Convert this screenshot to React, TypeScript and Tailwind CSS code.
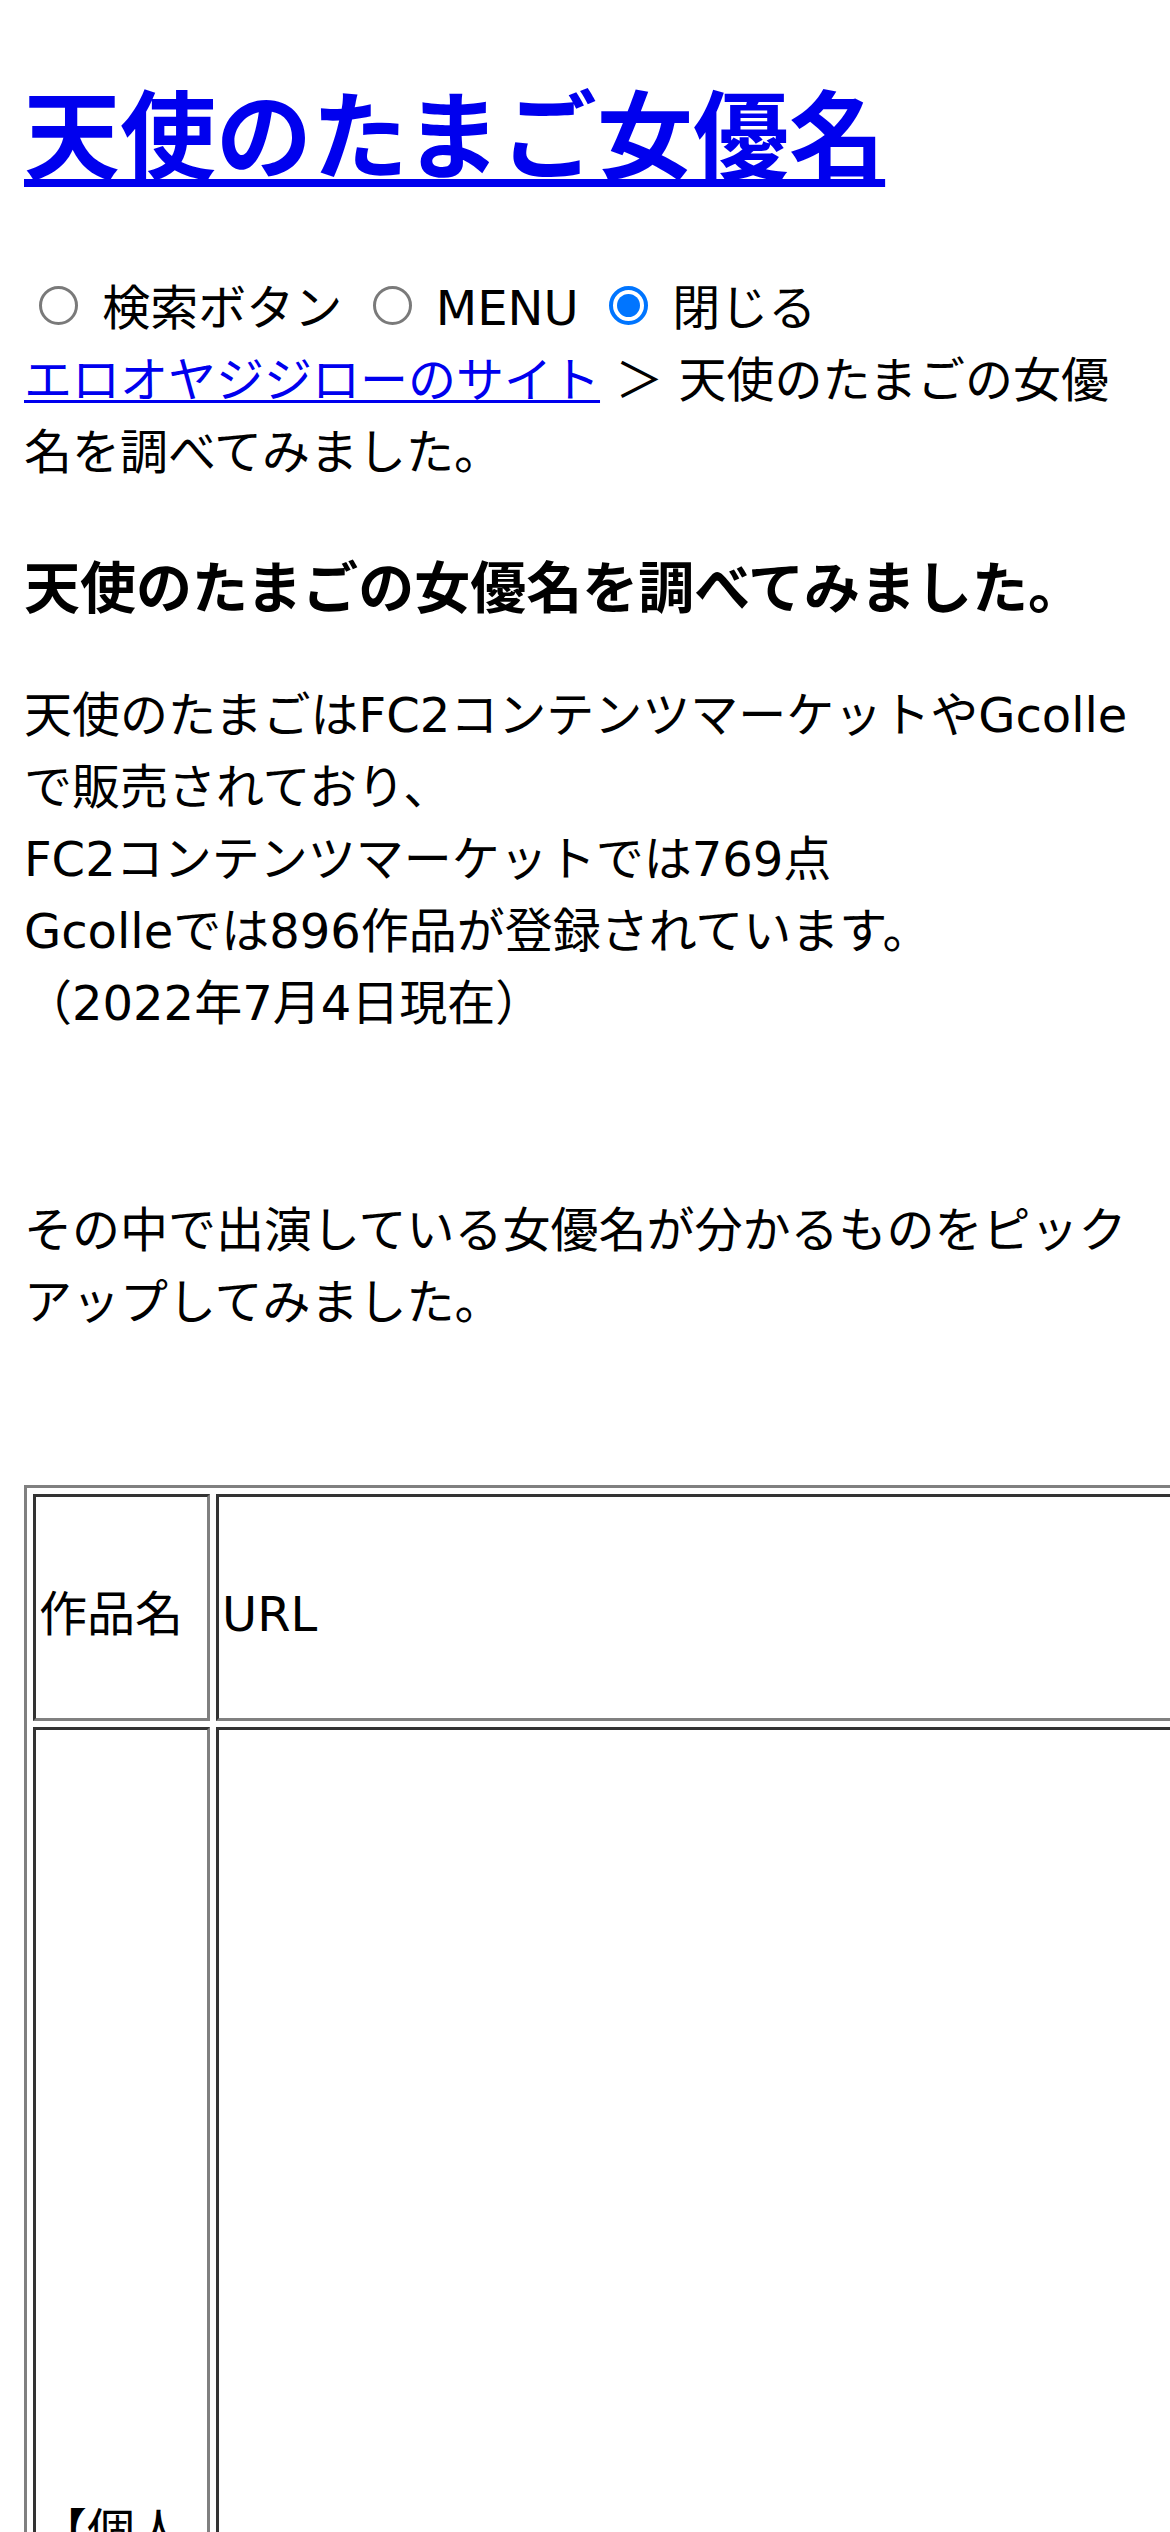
import React from 'react';

const Radio: React.FC<{ checked?: boolean }> = ({ checked }) =>
  checked ? (
    <span className="inline-block w-[39px] h-[39px] ml-[15px] mr-[9px] rounded-full border-[4px] border-[#0075ff] p-[4px] bg-white">
      <span className="block w-full h-full rounded-full bg-[#0075ff]" />
    </span>
  ) : (
    <span className="inline-block w-[39px] h-[39px] ml-[15px] mr-[9px] rounded-full border-[3px] border-[#7a7a7a] bg-white" />
  );

// classic table border="1" look: outset table, inset cells
const cell =
  'border-[3px] border-t-[#333] border-l-[#333] border-r-[#808080] border-b-[#808080] p-[3px] align-middle text-left font-normal';

export default function App() {
  return (
    <div className="h-[2532px] overflow-hidden bg-white text-black px-[24px] text-[48px] leading-[72px] font-['DejaVu_Sans','Noto_Sans_CJK_JP',sans-serif]">
      <h1 className="mt-[69px] mb-[64px] text-[96px] leading-[139px] font-bold">
        <a href="#" className="text-[#0000ee] underline decoration-[8px] underline-offset-[8px]">
          天使のたまご女優名
        </a>
      </h1>

      <div>
        <div>
          <Radio />{' '}検索ボタン{' '}<Radio />{' '}MENU{' '}<Radio checked />{' '}閉じる
        </div>
        <div>
          <a href="#" className="text-[#0000ee] underline decoration-[3px] underline-offset-[3px]">
            エロオヤジジローのサイト
          </a>{' '}＞ 天使のたまごの女優名を調べてみました。
        </div>
      </div>

      <h3 className="mt-[60px] text-[56px] leading-[81px] font-bold">天使のたまごの女優名を調べてみました。</h3>

      <p className="mt-[50px]">
        天使のたまごはFC2コンテンツマーケットやGcolleで販売されており、
        <br />
        FC2コンテンツマーケットでは769点
        <br />
        Gcolleでは896作品が登録されています。
        <br />
        （2022年7月4日現在）
      </p>

      <p className="mt-[155px]">その中で出演している女優名が分かるものをピックアップしてみました。</p>

      <table className="mt-[147px] w-[1600px] border-separate border-spacing-[6px] border-[3px] border-t-[#808080] border-l-[#808080] border-r-[#333] border-b-[#333]">
        <tbody>
          <tr>
            <td className={`${cell} w-[177px] h-[227px] pt-[15px]`}>作品名</td>
            <td className={`${cell} h-[227px] pt-[15px]`}>URL</td>
          </tr>
          <tr>
            <td className={`${cell} w-[177px]`}>【個人撮影】</td>
            <td className={cell}>
              <div className="h-[1668px]" />
            </td>
          </tr>
        </tbody>
      </table>
    </div>
  );
}
